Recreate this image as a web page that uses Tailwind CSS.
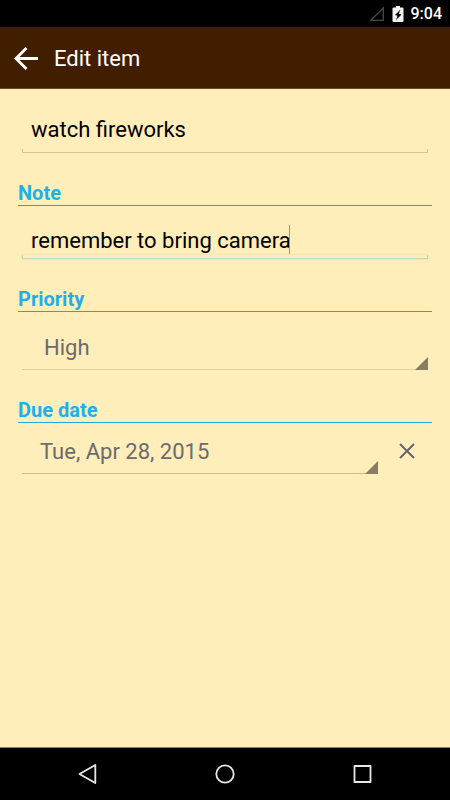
<!DOCTYPE html>
<html lang="en">
<head>
    <meta charset="UTF-8">
    <meta name="viewport" content="width=device-width, initial-scale=1.0">
    <title>Edit item</title>
    <script src="https://cdn.jsdelivr.net/npm/@tailwindcss/browser@4"></script>
</head>
<body class="min-h-screen flex flex-col bg-[#ffedba] font-['Roboto',sans-serif]">
    <!-- Status bar -->
    <div class="h-[27px] shrink-0 bg-black flex items-center justify-end pr-2 text-white">
        <svg class="w-4 h-4 mr-2" viewBox="0 0 16 16" fill="none" stroke="#4a4a4a" stroke-width="1.3">
            <path d="M2.800 14.300H15.300V1.800Z"/>
        </svg>
        <svg class="w-3 h-4 mr-[7px]" viewBox="0 0 12 16">
            <path fill="#f2f2f2" d="M4 0h4v1.500h2.500q1 0 1 1V15q0 1-1 1h-9q-1 0-1-1V2.500q0-1 1-1H4z"/>
            <path fill="#000" d="M8.500 3.500 3 9l2.500.7L4 14l5.500-5.600-2.700-.7z"/>
        </svg>
        <span class="text-base leading-5 font-medium">9:04</span>
    </div>

    <!-- App bar -->
    <header class="h-[62px] shrink-0 bg-[#421e00] border-b border-[#6b4a2a] flex items-center pl-[14px] text-white">
        <button type="button" aria-label="Back" class="mr-4">
            <svg class="w-6 h-6" viewBox="0 0 24 24" fill="none" stroke="currentColor" stroke-width="2.8">
                <path d="M24 12.500H3M12.500 2 2 12.500 12.500 23"/>
            </svg>
        </button>
        <h1 class="pt-0.5 text-[22px] leading-7">Edit item</h1>
    </header>

    <!-- Form -->
    <main class="grow px-[18px] pt-5">
        <form>
            <div class="relative mx-1">
                <input type="text" aria-label="Item" value="watch fireworks" class="block w-full h-11 pl-[9px] pb-1 text-[22px] text-black outline-none">
                <span class="absolute inset-x-0 bottom-0 h-1 border border-t-0 border-[#d3c499] pointer-events-none"></span>
            </div>

            <label for="note" class="block mt-6 h-[29px] pt-1 border-b border-[#1ea8e0] text-xl leading-6 font-bold text-[#1fb0ea]">Note</label>
            <div class="relative mx-1 mt-4">
                <input id="note" type="text" value="remember to bring camera" class="block w-full h-[37px] pl-[9px] text-[22px] text-black outline-none">
                <span class="absolute inset-x-0 bottom-0 h-1 border border-t-0 border-[#c3d9bb] shadow-[0_0_2px_#c3d9bb] pointer-events-none"></span>
                <!-- Text cursor -->
                <span class="absolute left-[267px] top-[3px] w-px h-[29px] bg-[#a0946f]"></span>
            </div>

            <label for="priority" class="block mt-6 h-[29px] pt-1 border-b border-[#1ea8e0] text-xl leading-6 font-bold text-[#1fb0ea]">Priority</label>
            <div class="relative mx-1 mt-[14px]">
                <select id="priority" class="block w-full h-11 pl-[22px] appearance-none border-b border-[#e0d1a4] text-[22px] text-[#6c6a6e] outline-none">
                    <option>High</option>
                </select>
                <svg class="absolute right-0 bottom-0 w-[13px] h-[13px] pointer-events-none" viewBox="0 0 13 13" fill="#857d64">
                    <path d="M13 0v13H0z"/>
                </svg>
            </div>

            <label for="due" class="block mt-6 h-[29px] pt-1 border-b border-[#1ea8e0] text-xl leading-6 font-bold text-[#1fb0ea]">Due date</label>
            <div class="mx-1 mt-[7px] flex">
                <div class="relative grow">
                    <select id="due" class="block w-full h-11 pl-[18px] appearance-none border-b border-[#cbbd93] text-[22px] text-[#6c6a6e] outline-none">
                        <option>Tue, Apr 28, 2015</option>
                    </select>
                    <svg class="absolute right-0 bottom-0 w-[13px] h-[13px] pointer-events-none" viewBox="0 0 13 13" fill="#857d64">
                        <path d="M13 0v13H0z"/>
                    </svg>
                </div>
                <button type="button" aria-label="Clear due date" class="w-[50px] h-[42px] pl-2 flex items-center justify-center">
                    <svg class="w-4 h-4" viewBox="0 0 16 16" fill="none" stroke="#67656b" stroke-width="2">
                        <path d="M1 1l14 14M15 1 1 15"/>
                    </svg>
                </button>
            </div>
        </form>
    </main>

    <!-- Navigation bar -->
    <nav class="h-[53px] shrink-0 bg-black border-t border-[#8a8065] px-[19px] flex items-center justify-between text-[#e8e8e8]">
        <button type="button" aria-label="Back" class="w-[137px] flex justify-center">
            <svg class="w-5 h-5" viewBox="0 0 20 20" fill="none" stroke="currentColor" stroke-width="1.8" stroke-linejoin="round">
                <path d="M17.300 1v18L1.500 10z"/>
            </svg>
        </button>
        <button type="button" aria-label="Home" class="w-[137px] flex justify-center">
            <svg class="w-5 h-5" viewBox="0 0 20 20" fill="none" stroke="currentColor" stroke-width="1.8">
                <circle cx="10" cy="10" r="8.700"/>
            </svg>
        </button>
        <button type="button" aria-label="Recent apps" class="w-[137px] flex justify-center">
            <svg class="w-5 h-5" viewBox="0 0 20 20" fill="none" stroke="currentColor" stroke-width="1.8" stroke-linejoin="round">
                <path d="M1.500 2h16v16h-16z"/>
            </svg>
        </button>
    </nav>
</body>
</html>
